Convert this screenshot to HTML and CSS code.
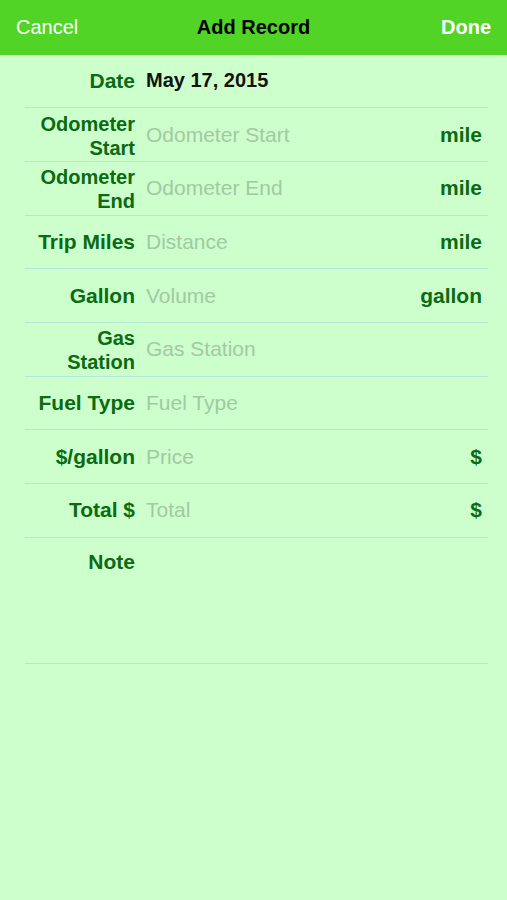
FILE: index.html
```html
<!DOCTYPE html>
<html>
    <head>
        <meta charset="utf-8">
        <title>Add Record</title>
        <link rel="stylesheet" href="styles.css">
    </head>
    <body>
        <div class="nav_bar">
            <span class="nav_btn">Cancel</span>
            <span class="nav_title">Add Record</span>
            <span class="nav_btn done">Done</span>
        </div>
        <div class="form">
            <div class="row">
                <div class="label">Date</div>
                <div class="value">May 17, 2015</div>
            </div>
            <div class="row">
                <div class="label small">Odometer<br>Start</div>
                <div class="hint">Odometer Start</div>
                <div class="unit">mile</div>
            </div>
            <div class="row">
                <div class="label small">Odometer<br>End</div>
                <div class="hint">Odometer End</div>
                <div class="unit">mile</div>
            </div>
            <div class="row">
                <div class="label">Trip Miles</div>
                <div class="hint">Distance</div>
                <div class="unit">mile</div>
            </div>
            <div class="row">
                <div class="label">Gallon</div>
                <div class="hint">Volume</div>
                <div class="unit">gallon</div>
            </div>
            <div class="row">
                <div class="label small">Gas<br>Station</div>
                <div class="hint">Gas Station</div>
            </div>
            <div class="row">
                <div class="label">Fuel Type</div>
                <div class="hint">Fuel Type</div>
            </div>
            <div class="row">
                <div class="label">$/gallon</div>
                <div class="hint">Price</div>
                <div class="unit">$</div>
            </div>
            <div class="row">
                <div class="label">Total $</div>
                <div class="hint">Total</div>
                <div class="unit">$</div>
            </div>
            <div class="row note">
                <div class="label">Note</div>
            </div>
        </div>
    </body>
</html>
```

FILE: styles.css
```css
body {
    margin:0;
    background:#ccffcc;
    font-family:"Liberation Sans", Arial, sans-serif;
    height:900px;
}
.nav_bar {
    height:54.5px;
    background:#51d426;
    display:grid;
    grid-template-columns:1fr auto 1fr;
    align-items:center;
    padding:0 16px;
}
.nav_btn {
    color:#fff;
    font-size:20px;
}
.nav_btn.done {
    font-weight:bold;
    text-align:right;
}
.nav_title {
    font-size:20px;
    font-weight:bold;
    color:#000;
}
.form {
    margin:0 19px 0 25px;
}
.row {
    height:52.7px;
    display:flex;
    align-items:center;
    border-bottom:1px solid #b1e9d8;
    padding-right:6px;
}
.label {
    width:110px;
    text-align:right;
    font-size:21px;
    font-weight:bold;
    color:#0b6a12;
    flex-shrink:0;
}
.label.small {
    font-size:20px;
    line-height:24px;
    padding-top:2px;
}
.value {
    margin-left:11px;
    font-size:20px;
    font-weight:bold;
    color:#111;
}
.hint {
    margin-left:11px;
    font-size:21px;
    color:#a3c9a3;
    flex:1;
}
.unit {
    font-size:21px;
    font-weight:bold;
    color:#0b6a12;
}
.row.note {
    height:125px;
    align-items:flex-start;
}
.row.note .label {
    margin-top:12px;
}
```
